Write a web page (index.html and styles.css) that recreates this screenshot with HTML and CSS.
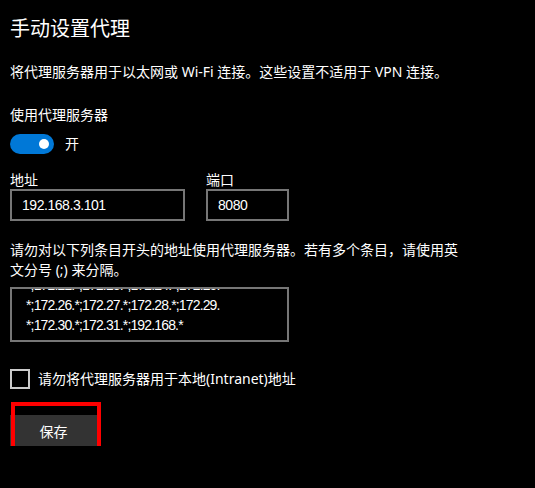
FILE: index.html
```html
<!DOCTYPE html>
<html lang="zh-CN">
<head>
<meta charset="utf-8">
<title>手动设置代理</title>
<link rel="stylesheet" href="styles.css">
</head>
<body>
<main class="page">
  <h1 class="title">手动设置代理</h1>
  <p class="desc">将代理服务器用于以太网或 Wi-Fi 连接。这些设置不适用于 VPN 连接。</p>
  <div class="label">使用代理服务器</div>
  <div class="toggle-row">
    <div class="toggle"><span class="knob"></span></div>
    <span class="toggle-text">开</span>
  </div>
  <div class="fields">
    <div class="field">
      <div class="field-label">地址</div>
      <div class="input input-addr">192.168.3.101</div>
    </div>
    <div class="field">
      <div class="field-label">端口</div>
      <div class="input input-port">8080</div>
    </div>
  </div>
  <p class="para">请勿对以下列条目开头的地址使用代理服务器。若有多个条目，请使用英文分号 (;) 来分隔。</p>
  <div class="textarea">
    <div class="textarea-content">
      <div>*;172.22.*;172.23.*;172.24.*;172.25.</div>
      <div>*;172.26.*;172.27.*;172.28.*;172.29.</div>
      <div>*;172.30.*;172.31.*;192.168.*</div>
    </div>
  </div>
  <div class="check-row">
    <span class="checkbox"></span>
    <span class="check-text">请勿将代理服务器用于本地(Intranet)地址</span>
  </div>
  <div class="btn-wrap">
    <button class="btn">保存</button>
    <span class="highlight"></span>
  </div>
</main>
</body>
</html>
```

FILE: styles.css
```css
html, body {
  margin: 0;
  padding: 0;
  background: #000;
}
body {
  color: #fff;
  font-family: "Noto Sans", "Noto Sans CJK SC", sans-serif;
  font-size: 14px;
  line-height: 20px;
}
.page {
  padding: 15px 0 0 10px;
  display: flex;
  flex-direction: column;
  align-items: flex-start;
}
.title {
  margin: 0;
  font-size: 20px;
  line-height: 28px;
  font-weight: normal;
}
.desc {
  margin: 19px 0 0;
}
.label {
  margin-top: 23px;
}
.toggle-row {
  margin-top: 9px;
  display: flex;
  align-items: center;
  gap: 11px;
  height: 20px;
}
.toggle {
  width: 44px;
  height: 20px;
  border-radius: 10px;
  background: #0078d7;
  display: flex;
  align-items: center;
  justify-content: flex-end;
  padding: 0 5px;
  box-sizing: border-box;
}
.knob {
  width: 10px;
  height: 10px;
  border-radius: 50%;
  background: #fff;
}
.fields {
  margin-top: 17px;
  display: flex;
  gap: 21px;
}
.field-label {
  line-height: 18px;
}
.input {
  height: 32px;
  box-sizing: border-box;
  border: 2px solid #767676;
  padding: 0 10px;
  display: flex;
  align-items: center;
  font-family: "Liberation Sans", "Noto Sans CJK SC", sans-serif;
  font-size: 14px;
  letter-spacing: -0.45px;
}
.input-addr { width: 175px; }
.input-port { width: 83px; }
.para {
  margin: 19px 0 0;
  width: 455px;
}
.textarea {
  margin-top: 7px;
  width: 279px;
  height: 55px;
  box-sizing: border-box;
  border: 2px solid #767676;
  overflow: hidden;
  padding: 0 10px 0 14px;
  font-family: "Liberation Sans", "Noto Sans CJK SC", sans-serif;
  font-size: 14px;
  letter-spacing: -0.85px;
}
.textarea-content {
  margin-top: -14px;
}
.check-row {
  margin-top: 27px;
  display: flex;
  align-items: center;
  gap: 8px;
  height: 20px;
}
.checkbox {
  width: 20px;
  height: 20px;
  box-sizing: border-box;
  border: 2px solid #cccccc;
}
.btn-wrap {
  margin-top: 26px;
  position: relative;
}
.btn {
  display: block;
  width: 87px;
  height: 31px;
  border: none;
  background: #333333;
  color: #fff;
  font-family: "Noto Sans", "Noto Sans CJK SC", sans-serif;
  font-size: 14px;
  padding: 0;
}
.highlight {
  position: absolute;
  left: 1px;
  top: -13px;
  width: 90px;
  height: 52px;
  box-sizing: border-box;
  border: 4px solid #ff0000;
}
```
